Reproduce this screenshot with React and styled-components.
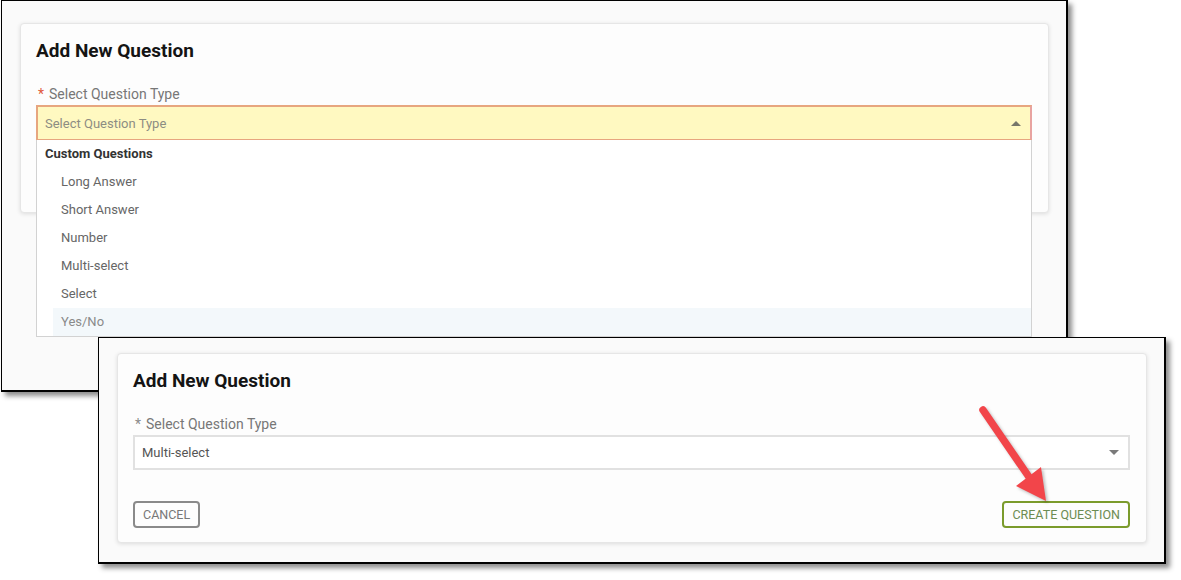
import React from 'react';
import styled, { createGlobalStyle } from 'styled-components';

const GlobalStyle = createGlobalStyle`
  html, body { margin: 0; padding: 0; background: #ffffff; }
  body { font-family: Roboto, "Liberation Sans", Arial, sans-serif; }
  * { box-sizing: border-box; }
`;

const Canvas = styled.div`
  position: relative;
  width: 1181px;
  height: 580px;
  background: #ffffff;
  overflow: hidden;
`;

const ScreenshotFrame = styled.div`
  position: absolute;
  left: ${(p) => p.$x}px;
  top: ${(p) => p.$y}px;
  width: ${(p) => p.$w}px;
  height: ${(p) => p.$h}px;
  background: #fafafa;
  border: 1px solid #000;
  border-right-width: 2px;
  border-bottom-width: 2px;
  box-shadow: 4px 4px 5px rgba(0, 0, 0, 0.45);
  padding: ${(p) => p.$pad};
`;

const Card = styled.div`
  background: #fdfdfd;
  border: 1px solid #e6e6e6;
  border-radius: 4px;
  box-shadow: 0 1px 4px rgba(0, 0, 0, 0.12);
  padding: 15px 16px 14px 15px;
  display: flex;
  flex-direction: column;
`;

const Title = styled.h2`
  margin: 0 0 21px 0;
  font-size: 19px;
  line-height: 24px;
  font-weight: 700;
  color: #141414;
`;

const FieldLabel = styled.div`
  font-size: 14px;
  line-height: 20px;
  color: #777;
  margin-bottom: 1px;
  display: flex;
  gap: 5px;
`;

const Required = styled.span`
  color: ${(p) => (p.$error ? '#e0593c' : '#8a8a8a')};
  padding-left: 2px;
`;

const Field = styled.div`
  position: relative;
`;

const SelectBox = styled.div`
  height: 35px;
  display: flex;
  align-items: center;
  padding: 0 9px 0 7px;
  font-size: 13px;
  background: ${(p) => (p.$active ? '#fff9c1' : '#ffffff')};
  color: ${(p) => (p.$active ? '#8d8d83' : '#555')};
  border: 2px solid ${(p) => (p.$active ? '#e7a67f' : '#e1e1e1')};
  border-bottom-width: ${(p) => (p.$active ? '1px' : '2px')};
  ${(p) => (p.$active ? 'border-right-color: #e8a3a0;' : '')}
`;

const Caret = styled.svg`
  margin-left: auto;
  width: 10px;
  height: 5px;
  fill: ${(p) => p.$color};
`;

const Menu = styled.div`
  position: absolute;
  top: 100%;
  left: 0;
  right: 0;
  background: #fff;
  border: 1px solid #d2d2d2;
  border-top: none;
  z-index: 2;
`;

const MenuGroup = styled.div`
  height: 28px;
  line-height: 28px;
  padding-left: 8px;
  font-size: 13px;
  font-weight: 700;
  color: #333;
`;

const MenuItem = styled.div`
  height: 28px;
  line-height: 28px;
  margin-left: 16px;
  padding-left: 8px;
  font-size: 13px;
  color: ${(p) => (p.$hover ? '#8a8a8a' : '#666')};
  background: ${(p) => (p.$hover ? '#f3f8fb' : 'transparent')};
`;

const Footer = styled.div`
  margin-top: 31px;
  display: flex;
  justify-content: space-between;
  visibility: ${(p) => (p.$covered ? 'hidden' : 'visible')};
`;

const OutlineButton = styled.button`
  height: 27px;
  padding: 0 8px;
  font-family: inherit;
  font-size: 12.5px;
  text-transform: uppercase;
  background: transparent;
  border-radius: 4px;
  border: 2px solid ${(p) => (p.$primary ? '#7b9b2c' : '#8a8a8a')};
  color: ${(p) => (p.$primary ? '#6c8c52' : '#777')};
`;

const Callout = styled.svg`
  position: absolute;
  left: 970px;
  top: 400px;
  width: 90px;
  height: 110px;
  pointer-events: none;
  filter: drop-shadow(2px 2px 1.5px rgba(0, 0, 0, 0.25));
`;

const ITEMS = ['Long Answer', 'Short Answer', 'Number', 'Multi-select', 'Select', 'Yes/No'];

function QuestionCard({ open, value }) {
  return (
    <Card>
      <Title>Add New Question</Title>
      <FieldLabel>
        <Required $error={open}>*</Required>
        <span>Select Question Type</span>
      </FieldLabel>
      <Field>
        <SelectBox $active={open}>
          <span>{value}</span>
          <Caret viewBox="0 0 10 5" $color={open ? '#77776a' : '#7a7a7a'}>
            {open ? <polygon points="0,5 5,0 10,5" /> : <polygon points="0,0 10,0 5,5" />}
          </Caret>
        </SelectBox>
        {open && (
          <Menu>
            <MenuGroup>Custom Questions</MenuGroup>
            {ITEMS.map((item) => (
              <MenuItem key={item} $hover={item === 'Yes/No'}>
                {item}
              </MenuItem>
            ))}
          </Menu>
        )}
      </Field>
      <Footer $covered={open}>
        <OutlineButton>Cancel</OutlineButton>
        <OutlineButton $primary>Create Question</OutlineButton>
      </Footer>
    </Card>
  );
}

export default function App() {
  return (
    <>
      <GlobalStyle />
      <Canvas>
        <ScreenshotFrame $x={1} $y={0} $w={1067} $h={392} $pad="22px 17px 0 18px">
          <QuestionCard open value="Select Question Type" />
        </ScreenshotFrame>
        <ScreenshotFrame $x={98} $y={337} $w={1068} $h={227} $pad="15px 17px 0 18px">
          <QuestionCard value="Multi-select" />
        </ScreenshotFrame>
        <Callout viewBox="970 400 90 110">
          <line x1="983" y1="410" x2="1029" y2="477" stroke="#f2454a" strokeWidth="7.5" strokeLinecap="round" />
          <polygon points="1046,501 1016,486 1041,467" fill="#f2454a" />
        </Callout>
      </Canvas>
    </>
  );
}
